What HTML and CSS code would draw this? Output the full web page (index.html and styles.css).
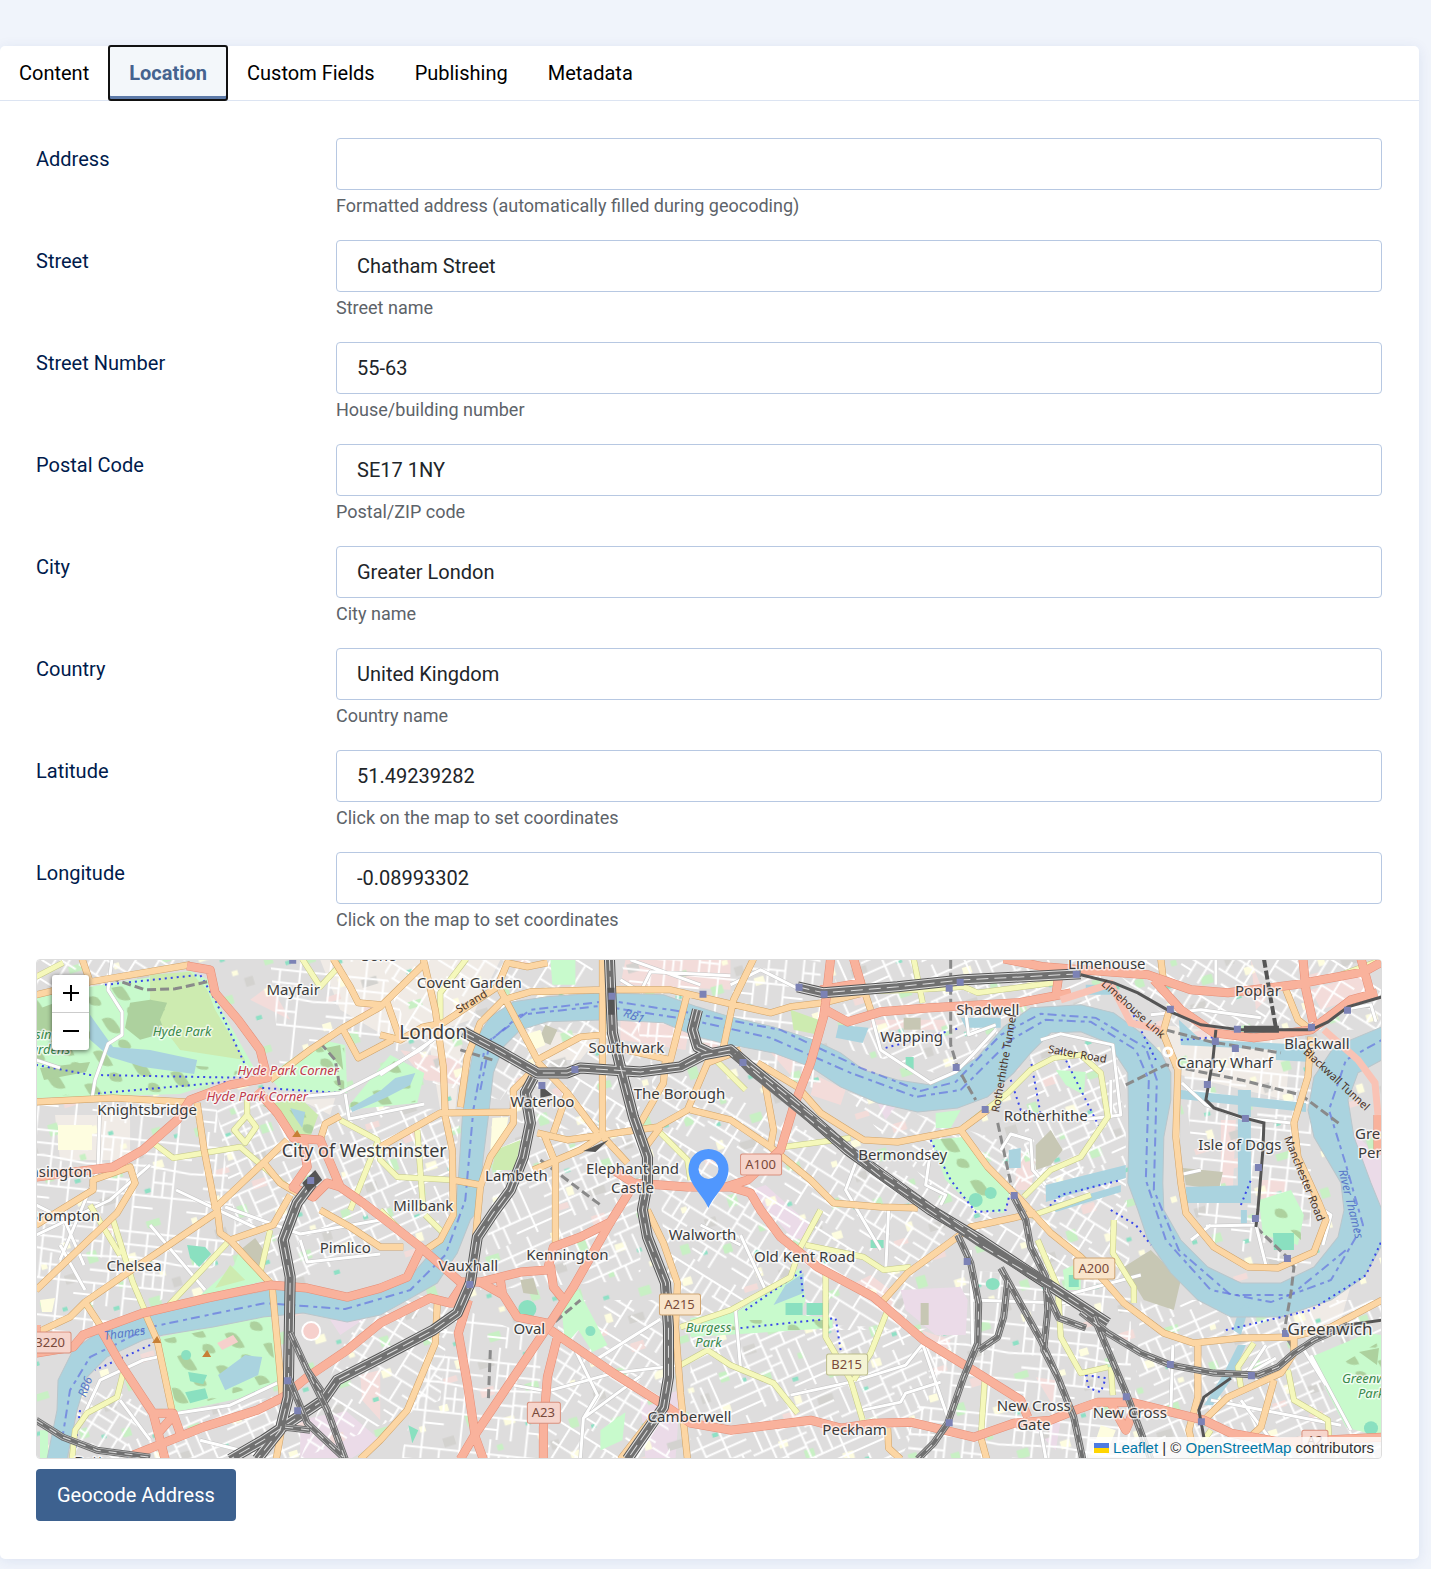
FILE: index.html
```html
<!DOCTYPE html>
<html lang="en">
<head>
<meta charset="utf-8">
<meta name="viewport" content="width=device-width, initial-scale=1">
<title>Location</title>
<link rel="stylesheet" href="styles.css">
</head>
<body>
<main class="card">
  <div class="tabs" role="tablist">
    <button class="tab" type="button" role="tab">Content</button>
    <button class="tab tab-active" type="button" role="tab" aria-selected="true">Location</button>
    <button class="tab" type="button" role="tab">Custom Fields</button>
    <button class="tab" type="button" role="tab">Publishing</button>
    <button class="tab" type="button" role="tab">Metadata</button>
  </div>
  <form class="panel">
    <div class="fields">
      <div class="field"><label for="address">Address</label><div><input id="address" type="text"><p class="help">Formatted address (automatically filled during geocoding)</p></div></div>
      <div class="field"><label for="street">Street</label><div><input id="street" type="text" value="Chatham Street"><p class="help">Street name</p></div></div>
      <div class="field"><label for="number">Street Number</label><div><input id="number" type="text" value="55-63"><p class="help">House/building number</p></div></div>
      <div class="field"><label for="postal">Postal Code</label><div><input id="postal" type="text" value="SE17 1NY"><p class="help">Postal/ZIP code</p></div></div>
      <div class="field"><label for="city">City</label><div><input id="city" type="text" value="Greater London"><p class="help">City name</p></div></div>
      <div class="field"><label for="country">Country</label><div><input id="country" type="text" value="United Kingdom"><p class="help">Country name</p></div></div>
      <div class="field"><label for="lat">Latitude</label><div><input id="lat" type="text" value="51.49239282"><p class="help">Click on the map to set coordinates</p></div></div>
      <div class="field"><label for="lng">Longitude</label><div><input id="lng" type="text" value="-0.08993302"><p class="help">Click on the map to set coordinates</p></div></div>
    </div>

    <div class="map">
      <svg class="map-canvas" viewBox="37 960 1343 498" preserveAspectRatio="xMidYMid slice" role="img" aria-label="Map of London">
        <defs>
          <pattern id="st-a" width="96" height="84" patternUnits="userSpaceOnUse" patternTransform="rotate(-24)">
            <path class="st" d="M0 12H96M0 40H58M58 34H96M0 66H96M10 0V40M31 12V84M52 0V66M74 0V34M86 34V84M10 54H31M31 27H52M64 34V66M44 66V84M0 77H31M52 50H64M66 77H96M20 12V40M52 22H74M74 22H96M75 40V66M31 53H52M20 40V54M56 66V84"/>
          </pattern>
          <pattern id="st-b" width="88" height="100" patternUnits="userSpaceOnUse" patternTransform="rotate(32)">
            <path class="st" d="M0 9H88M0 30H40M40 36H88M0 58H88M0 82H50M50 76H88M8 9V58M24 0V30M40 9V100M58 36V76M72 0V58M80 58V100M16 58V82M40 47H58M24 70H40M50 9V36M60 88H80M28 82V100M8 44H40M28 30V44M58 22H88M70 58V76M16 92H28M60 9V22"/>
          </pattern>
          <pattern id="st-c" width="104" height="92" patternUnits="userSpaceOnUse" patternTransform="rotate(6)">
            <path class="st" d="M0 15H104M0 44L60 40L104 44M0 70H104M14 0V44M33 15V70M50 0V92M68 15V70M88 0V92M14 57H33M50 28H68M68 56H88M20 70V92M0 82H20M50 82H70M34 28H50M88 30H104M24 15V44M68 28H88M78 44V70M33 56H50M42 56V70M34 70V92M14 28H24"/>
          </pattern>
          <pattern id="spots" width="157" height="133" patternUnits="userSpaceOnUse" patternTransform="rotate(-17)">
            <path fill="#fefde0" d="M8 10h9v7h-9zM66 40h11v8h-11zM120 92h10v8h-10zM36 104h7v9h-7zM140 24h6v6h-6zM94 66h6v5h-6z"/>
            <path fill="#c8f0c4" d="M30 26h10v12h-10zM96 14h14v7h-14zM76 88h12v9h-12zM12 72h9v9h-9zM128 60h9v10h-9zM52 64h6v6h-6z"/>
            <path fill="#f3dcd9" d="M52 6h14v9h-14zM20 118h14v6h-14z"/>
            <path fill="#8fe0c5" d="M86 50h5v4h-5zM40 86h6v4h-6zM148 72h5v4h-5zM104 116h6v4h-6z"/>
            <path fill="#d3d2cf" d="M58 112h16v8h-16zM2 42h12v9h-12zM104 76h9v9h-9z"/>
          </pattern>
          <pattern id="trees" width="40" height="34" patternUnits="userSpaceOnUse" patternTransform="rotate(15)">
            <path fill="#add19e" d="M2 6q8-6 15 0t8 8q-9 5-15 0t-8-8zM24 22q7-4 12 1t-4 6-8-7z"/>
          </pattern>

          <path id="thames" d="M47 1459L57 1410L58 1380L73 1350L97 1333L143 1317L207 1302L270 1290L297 1290L347 1298L380 1293L407 1280L433 1250L447 1227L455 1210L458 1180L462 1117L467 1083L475 1040L490 1017L513 1002L547 997L600 993L663 995L697 1007L730 1017L773 1027L813 1040L840 1053L863 1070L897 1080L930 1085L953 1073L977 1057L1003 1027L1030 1008L1080 1005L1113 1013L1140 1033L1160 1053L1170 1073L1170 1100L1163 1137L1162 1183L1163 1210L1180 1240L1207 1267L1240 1283L1280 1283L1313 1267L1337 1237L1343 1210L1340 1183L1313 1137L1307 1110L1313 1077L1333 1047L1381 1027V1060L1357 1073L1347 1100L1353 1137L1370 1183L1381 1210V1245L1363 1277L1330 1300L1280 1317L1230 1317L1197 1300L1170 1273L1147 1240L1137 1210L1127 1183L1128 1137L1127 1073L1107 1043L1080 1032L1050 1033L1030 1053L1013 1073L987 1097L957 1108L917 1112L877 1103L840 1087L810 1067L773 1053L730 1045L697 1037L663 1023L607 1020L547 1022L520 1030L503 1047L493 1073L488 1117L483 1157L478 1210L470 1220L457 1253L437 1283L407 1300L380 1315L347 1322L303 1313L263 1317L213 1327L163 1335L143 1340L107 1357L87 1377L77 1410L67 1459Z"/>

          <g id="minor">
            <path d="M112 959L108 990L122 1012V1035L108 1044L95 1080L92 1098M262 1100L340 1093L381 1072M345 1094L349 1119L424 1104M381 1072L420 1050L444 1030M36 1235L110 1200L150 1165M36 1205L64 1219L84 1265M100 1100L98 1170L60 1260M225 1207L300 1234L380 1220M300 1240L307 1262L380 1254M60 1245L85 1290M150 1225L205 1290M176 1190L260 1230"/>
            <path d="M177 1413L230 1405L277 1383M77 1430L100 1380L143 1360L157 1357M120 1400L150 1440M200 1440L260 1455M590 1363L660 1319M513 1385L547 1391L613 1373L680 1365M575 1350L597 1395L583 1418L580 1458M583 1418L640 1376M740 1235L765 1290L735 1310L740 1368M790 1395L850 1382L905 1365L922 1344L948 1420M862 1410L900 1402L905 1393L940 1382M888 1210L885 1272M970 1250L972 1345M970 1300L1065 1303M1065 1295L1140 1275"/>
            <path d="M620 980L640 992L650 972L730 976M630 960L700 985M870 1012L880 1050L930 1083L955 1072L972 1055L995 1030M965 1013L968 1035L995 1025M730 985L760 970L800 990M1000 1150L1010 1134L1030 1140L1032 1170L1045 1185M1040 1040L1060 1034L1112 1045L1120 1115L1080 1120M1110 1080V1118M1181 1083L1205 1105L1240 1118L1290 1123M1178 1100V1175L1200 1170M1205 1226L1255 1225L1265 1265M1210 1225L1190 1240M1315 1205L1330 1215L1322 1245M1172 1345L1170 1410M1310 1355L1350 1430M1300 1345L1325 1385M1240 1400L1270 1440M1210 1400L1340 1425M1265 1345L1245 1375L1275 1358M1040 1430L1045 1458M380 1075L440 1035M860 1150L845 1190L880 1250M930 1150L925 1185L945 1195L940 1205M1150 1015L1200 1010L1260 1018M1215 960V985M1330 1012L1370 1005L1375 1022M36 1060L60 1068M700 1225L740 1245"/>
          </g>
          <g id="yellow">
            <path d="M36 977L63 963M302 959L320 987L340 965M153 1143L173 1158L240 1147L287 1187M234 1130L245 1143L256 1127L247 1115ZM247 1115V1100M340 1120L377 1140L380 1160L397 1177L453 1180M417 1130L423 1210M440 1020V993L466 959M113 1220L133 1283L145 1311M167 1307L227 1243M270 1230L260 1273M123 1373L117 1397L87 1413L75 1430L72 1459M350 1210L378 1140M90 1205L120 1255"/>
            <path d="M657 1130L687 1160L690 1180M845 992L917 990L963 987L977 993L1053 983M913 959L922 1003M783 1147L850 1138M960 1130L1007 1093L1030 1070L1053 1058L1080 1055L1100 1073L1107 1117L1080 1157L1050 1170L1023 1197M680 1327L730 1310L790 1277L800 1247L820 1210M805 1245L863 1257L883 1270L910 1267M825 1273V1337L850 1380L862 1420M680 1365L707 1350L730 1365L773 1383L797 1413M887 1310L870 1353L853 1380M1037 1240L1057 1287L1060 1337L1080 1373L1107 1367M1113 1220L1112 1253L1133 1287V1303M1253 1343L1237 1367L1240 1387M1287 1370L1293 1400L1327 1420L1328 1437M1210 1430L1190 1459M1381 960L1340 975M1110 1367L1112 1395"/>
            <path d="M380 1210L410 1240M425 1215L445 1235M1030 1216L1090 1195M745 1090L700 1045M980 1440L984 1380"/>
          </g>
          <g id="orange">
            <path d="M36 995L90 982L190 965M82 959L90 982M36 1102L113 1098L187 1102M197 1103L204 1150L215 1207M270 1080L310 1050L343 1028L380 1007L423 965M333 959L350 987L358 1003L380 1005M343 1030L358 1058L392 1040M320 1140L325 1124L340 1116M213 1210L263 1163L287 1140M263 1162L280 1183L297 1193M36 1225L93 1190V1180L130 1167L135 1183L117 1213L36 1290M36 1333L70 1317L85 1302L127 1273L157 1253L217 1212M85 1302L102 1328M145 1313L157 1340L172 1411M272 1287L282 1395M217 1208L220 1233L230 1240L270 1283M230 1240L273 1225L290 1195M320 1210L350 1227L380 1247L403 1247"/>
            <path d="M423 959L435 1010L443 1067L445 1117L452 1150L453 1215L440 1240L425 1250M387 1003L400 1040L423 1027L443 1023L497 987L507 963L527 967L547 963M460 1107L467 1057L480 1023L503 1000L530 992L603 990L670 990L730 1004L770 1013L790 1007L823 1003L863 993M500 990L537 1060L580 1037L602 1035M602 959V1133M537 1062L567 1093L597 1133M537 1133L567 1140L657 1127L687 1110L707 1063L740 1050M530 1073L513 1090V1123L490 1157L480 1187L475 1240L471 1275M380 1147L440 1113L513 1112M453 1180L480 1185M533 1170L580 1150L600 1137M543 1133L555 1163V1247M567 1093L553 1133M603 1137L627 1163M640 1123L663 1083L665 1060M687 993L670 1060L625 1050M723 1047L733 1000L753 959M690 1110L730 1120L770 1147L810 1180L833 1203L880 1207L917 1208M643 1150L660 1127M860 980L870 1010M380 1035L400 1040"/>
            <path d="M647 1210L663 1243L677 1283L675 1327L680 1393L687 1459M437 1303L435 1343L407 1410L380 1440L360 1459M757 1063L797 1087L820 1113L863 1140L897 1142L960 1130L987 1110M960 1130L987 1167L1020 1200L1050 1233L1080 1257L1103 1280L1123 1303L1163 1333L1193 1343L1240 1338L1290 1337L1330 1327L1381 1300M763 1075L773 1130L770 1147M1035 1213L970 1227L943 1247L907 1273L883 1300M1160 959L1163 985M1168 1012L1162 1033L1177 1070L1175 1137L1180 1183L1185 1213L1213 1247L1247 1267L1277 1268L1313 1252L1325 1220L1318 1203L1297 1157L1293 1123L1307 1077L1310 1037M1285 990L1297 1020L1310 1030M1293 1337V1353L1280 1373L1227 1397L1203 1420M1197 1343V1397L1188 1430L1195 1459M1273 1380L1260 1427L1248 1438M980 1437L986 1459M887 1428L888 1448L900 1459M285 1410L276 1459M620 1459L650 1420"/>
          </g>
          <g id="red">
            <path d="M187 966L210 970L215 993L238 1020L260 1050L267 1078L230 1085L190 1100L177 1120L143 1150L113 1167L36 1177M257 1090L277 1113L293 1138L320 1140L330 1163L340 1187L363 1203L420 1247L460 1282L480 1282L520 1272L547 1270L553 1247L580 1237L610 1222L630 1190M303 1140L307 1167L293 1187L313 1197L327 1183L340 1187M36 1353L73 1347L83 1335L143 1313L207 1298L270 1285L307 1288L347 1297L380 1288L407 1277L420 1250M100 1328L120 1363L153 1413L160 1440L165 1459M133 1455L203 1427L257 1410L283 1397L307 1377L347 1350L380 1323L430 1298L450 1303L468 1303M153 1413H173L180 1433M173 1416L157 1434M36 1345V1325"/>
            <path d="M450 1303L462 1285M610 1222L573 1287L547 1327L473 1437L460 1459M550 1265L553 1287L562 1298M480 1282L503 1295L517 1317L547 1323M500 1280L502 1293M468 1300L458 1333L467 1383L475 1437L483 1459M557 1337L547 1377L543 1427V1459M550 1330L613 1373L667 1407L690 1423L730 1430L810 1420L840 1428L873 1423L910 1422L973 1437L1013 1423L1050 1420L1080 1408L1097 1402H1130L1203 1420L1230 1433L1280 1442L1381 1437M613 1170L633 1183L687 1187L730 1187L750 1193L760 1210L780 1237L817 1267L873 1297L923 1340L977 1373L1020 1400L1027 1417M625 1195L635 1182M725 1187L747 1180L780 1150L793 1107L810 1063L823 1017L825 1003L830 959M825 1010L847 1022L880 1012L930 1008L1017 1003L1070 993M853 959L860 983L820 990M1003 959L1043 967L1080 970L1147 975L1190 990L1227 993L1293 985L1363 972L1381 962M1153 980L1180 1010L1213 1033L1253 1038L1310 1030L1333 1013L1350 1000L1376 993M1302 959L1305 990L1312 1022M1360 959L1370 995M1058 975L1055 997M1377 1115V1155M1110 1403L1125 1430L1135 1405"/>
          </g>
          <g id="rail-wide">
            <path d="M463 1032L497 1050L537 1073H567L580 1068L640 1072L680 1067L703 1055L730 1050L750 1067L787 1097L847 1150L930 1210L980 1240L1030 1273L1107 1323M609 959L612 1033L620 1067L633 1117L647 1157V1183L642 1210L647 1237L665 1283L668 1327V1377L663 1407L627 1459M697 1010L692 1030L697 1047L710 1053M533 1078L525 1093L530 1123L523 1157L510 1190L493 1213L477 1237L470 1283L457 1313L433 1330L380 1358L337 1380L323 1400L263 1440L230 1459M312 1183L297 1203L283 1240L290 1277L288 1397L280 1430L257 1459M797 987L823 993L897 987L963 980L1080 974"/>
          </g>
          <g id="rail-mid">
            <path d="M290 1333L307 1370L327 1410L345 1459M288 1377L307 1423L343 1457M36 1420L63 1437L97 1450L150 1457M957 1235L970 1263L978 1303L977 1343L963 1377L947 1423L933 1443L917 1459M1007 1280L1003 1317L997 1337L978 1350M1000 1268L1040 1340L1057 1377L1073 1417L1082 1459M1013 1197L1025 1220L1030 1247L1045 1277L1047 1310L1043 1350L1057 1377M1093 1317L1107 1350L1127 1397L1150 1459M1080 1312L1107 1333L1140 1353L1170 1365L1213 1373L1257 1375L1277 1367L1293 1353L1313 1340L1347 1325M1045 1290L1058 1318L1085 1328M307 1370L322 1392M285 1427L310 1430"/>
          </g>
        </defs>

        <rect x="36" y="959" width="1345" height="500" fill="#dedddd"/>
        <g fill="#f0ebe6">
          <path d="M55 1115H130V1160H60ZM320 960H500L470 1020L400 1045L340 1010ZM425 1020L462 1040L455 1110H440ZM300 1100L335 1098L330 1115ZM1160 1025L1290 1040L1285 1100L1180 1075ZM1300 1310L1350 1285L1340 1320L1305 1340ZM520 1030L600 1035L580 1060L540 1060Z"/>
        </g>
        <g fill="#f3dcda">
          <path d="M625 960H730V990L620 985ZM620 1000L690 1020L685 1050L620 1040ZM250 1000L270 985L290 1020ZM750 1030L800 1050L790 1075ZM815 1075L845 1090L840 1105L810 1095ZM870 1020H945V1030H870ZM1250 960L1265 1000L1255 1010ZM1310 990L1360 975L1365 995L1320 1010ZM1220 1120L1235 1120L1232 1190H1220ZM1260 1180H1285V1200H1260ZM1015 1150L1035 1160L1030 1190H1015ZM920 1330L950 1340L945 1352ZM1035 1377L1055 1380L1052 1405ZM360 1375L380 1370V1420L362 1400ZM870 1275L890 1290L895 1320L850 1285ZM400 1050L460 1060V1085L425 1080Z"/>
        </g>
        <g fill="#ebdbe8">
          <path d="M750 1190L765 1185L810 1225L798 1245ZM300 1420L345 1410L380 1440L350 1459H300ZM640 1400L680 1390L675 1459H645ZM330 1320L370 1315L340 1335ZM1340 1120L1381 1160V1215L1365 1180ZM877 1103L895 1107L885 1120ZM1030 1425L1060 1420L1055 1450Z"/>
        </g>
        <rect x="36" y="959" width="1345" height="500" fill="url(#spots)"/>
        <g>
          <path fill="url(#st-c)" d="M36 1100H215L240 1250L145 1310L36 1350ZM270 960H380L420 1060L340 1030L280 1070ZM620 959H820V1090L640 1040ZM1180 1040H1310V1270L1200 1240ZM960 1270L1130 1280V1459H900ZM440 1300L540 1340V1459H400Z"/>
          <path fill="url(#st-a)" d="M215 1100L460 1110L450 1220L270 1290L240 1250ZM830 959H1100V1000L960 1080L850 1050ZM500 1140L640 1120V1280L480 1290ZM170 1420L300 1390V1459H100ZM690 1320L960 1330L900 1459H690ZM1140 1300L1381 1300V1459H1130ZM1030 1050L1125 1040V1180L1020 1190Z"/>
          <path fill="url(#st-b)" d="M380 959H600L500 1100L420 1080ZM650 1060L960 1200L900 1330L670 1330ZM840 1090L1125 1180L1130 1290L1000 1260ZM560 1300H660L670 1459H545ZM80 1370L150 1410L120 1459H72ZM1100 959H1381V1030H1180ZM380 1290L450 1300L440 1400L300 1459L340 1350ZM520 1040L640 1000V1140L500 1120ZM36 959H190L90 990L36 990Z"/>
        </g>
        <path fill="#ebdbe8" d="M900 1290L960 1287L967 1300L965 1335L935 1335L905 1310Z"/>
        <path fill="#c7c7b4" d="M1123 1267L1150 1250L1180 1280L1173 1310L1143 1300ZM1182 1168L1222 1172L1218 1190L1185 1185ZM1035 1145L1050 1130L1062 1150L1050 1165L1035 1170ZM240 1250L255 1238L267 1255L258 1270ZM520 1280L533 1278L538 1295L523 1293ZM545 1025L557 1030L550 1045L538 1040ZM903 1018H920V1030H903ZM920 1303H928V1325H920Z"/>

        <g fill="#c8facc">
          <path d="M36 998L90 987L190 971L208 980L217 1002L255 1070L180 1094L36 1098Z"/>
          <path d="M268 1075L320 1040L345 1045L347 1093L280 1090ZM345 1110L390 1055L424 1073L417 1103ZM160 1337L270 1313L279 1380L240 1398L175 1412ZM234 1265L240 1250L268 1280L225 1290L195 1300ZM690 1318L730 1313L800 1268L805 1300L800 1315L832 1318V1328L690 1337ZM1310 1357L1367 1333L1381 1335V1437L1345 1427L1327 1393ZM930 1140L962 1137L1010 1190L1003 1213L975 1210L945 1180ZM1258 1200L1290 1190L1303 1215L1297 1245L1262 1235ZM560 1300L578 1290L607 1345L592 1352L578 1330L565 1345ZM600 1430L625 1412L622 1440L600 1450ZM1055 1070L1085 1072L1083 1095L1065 1085ZM935 1113L960 1110L950 1128H935ZM40 1430H48V1459H40ZM1062 1270L1080 1262V1290L1065 1290ZM550 960H575V985H552Z"/>
        </g>
        <g fill="#cdebb0">
          <path d="M150 975L190 972L207 990L215 1010L245 1060L180 1050L150 1010ZM265 1105L300 1098L318 1115L310 1137L290 1135ZM495 1150L520 1140L515 1170L492 1170ZM790 1010L818 1020V1035L793 1030ZM230 1265L245 1280L215 1288Z"/>
        </g>
        <path fill="url(#trees)" d="M36 1000L130 985L165 1010L120 1060L250 1070L180 1092L36 1096ZM315 1045L344 1045V1090L320 1075ZM345 1108L395 1060L420 1075L415 1102ZM160 1340L268 1317L277 1380L177 1410ZM930 1140L962 1137L1010 1190L975 1205ZM262 1105L318 1115L310 1137ZM1330 1370L1381 1340V1400ZM1262 1205L1300 1210V1240ZM700 1320L830 1320V1330H700Z"/>
        <path fill="#add19e" d="M130 1003L150 1000L167 1003L160 1020L165 1033L140 1040L125 1028ZM36 1010L55 1003L75 1012L70 1035L36 1040ZM40 1068L90 1062L86 1072L44 1080ZM325 1048L340 1045L343 1070ZM1358 1352L1378 1348L1376 1365Z"/>
        <g fill="#8ae0c0">
          <path d="M187 1245L205 1247L211 1254L199 1267L190 1258ZM188 1372L207 1375L203 1384L190 1381ZM185 1392L205 1388L208 1398L190 1403ZM785 1303H802V1315H785ZM806 1303H828V1315H806ZM1272 1233H1293V1250H1273ZM870 1240H883V1248H870ZM1068 1275H1078V1287H1068ZM905 1057H913V1070H905ZM408 1425L418 1430L412 1443Z"/>
          <circle cx="527" cy="1309" r="9"/><circle cx="590" cy="1331" r="5"/><circle cx="186" cy="1355" r="5"/><circle cx="975" cy="1200" r="7"/><circle cx="990" cy="1193" r="6"/><circle cx="1370" cy="1428" r="7"/>
          <ellipse cx="992" cy="1284" rx="7" ry="6"/>
        </g>
        <path fill="#fefde0" d="M58 1125H92V1150H58ZM492 1118L508 1117L505 1137L490 1150ZM525 1035L540 1030L545 1045L528 1052ZM1100 1425L1115 1430L1105 1455H1090ZM40 1300L55 1298L52 1312H42Z"/>
        <g fill="#f6d0cc">
          <path d="M217 1343L233 1335L238 1342L222 1350Z"/><circle cx="311" cy="1331" r="9" stroke="#fff" stroke-width="2"/>
        </g>

        <g fill="#aad3df">
          <use href="#thames"/>
          <path d="M90 1015L113 1047L150 1050L197 1060L194 1074L143 1067L110 1057L90 1040ZM350 1108L381 1090L395 1078L415 1073L410 1085L385 1098L352 1112ZM290 1108L305 1112L302 1128L295 1118ZM218 1375L245 1355L262 1357L258 1375L225 1390ZM773 1305L785 1285L803 1273V1293L778 1303ZM838 1025L868 1028L862 1043L835 1038ZM1178 1020L1200 1040L1310 1045V1062L1275 1060V1050L1180 1045ZM1180 1090L1305 1103V1112L1180 1099ZM1237 1090H1250V1200H1237ZM1185 1187L1250 1185V1203H1186ZM1045 1185L1125 1165V1178L1045 1202ZM1008 1150L1020 1148V1168H1008ZM1050 1205L1120 1185V1192L1055 1212ZM1237 1345L1245 1345L1230 1380L1212 1405L1203 1405L1222 1375ZM1250 1300L1240 1335L1232 1330L1238 1310ZM960 1018H1000V1028H965ZM1085 985H1110V995H1085ZM1240 1210H1246V1225H1240Z"/>
        </g>
        <g class="bank"><use href="#thames"/></g>
        <g class="ferry">
          <path d="M62 1440L70 1390L90 1357L150 1327L265 1303L345 1309L410 1290L445 1255L465 1200L473 1110L485 1045L520 1015L600 1006L690 1020L770 1038L850 1073L915 1097L960 1090L1010 1040L1045 1020L1090 1022L1135 1050L1148 1080L1145 1180L1165 1240L1210 1290L1270 1302L1330 1280L1362 1225L1345 1165L1328 1110L1345 1060L1381 1040"/>
          <path d="M480 1090L490 1040L530 1010L610 1001L690 1013L780 1030L860 1068L920 1091L955 1082L1000 1035L1040 1014L1095 1018L1145 1048L1156 1080L1153 1190L1178 1250L1230 1295L1290 1295L1345 1250"/>
        </g>
        <g class="path-blue">
          <path d="M105 985L200 975L215 1000L245 1065M36 1065L90 1075L250 1078M92 1094L250 1080M262 1088L340 1093M930 1140L950 1180L975 1212L1005 1210L1010 1190L965 1140M740 1328L835 1318L840 1350M745 1310L800 1272L803 1300M1010 1080L1020 1110L1040 1115L1030 1060M1130 1010L1155 1060M1240 1205L1250 1180M1225 1330L1310 1310L1365 1275L1381 1240M1060 1050L1100 1130M1045 1210L1060 1195L1120 1180M1085 1375L1105 1378L1100 1392L1088 1388ZM150 1345L95 1370M80 1410L75 1450M1180 1040L1240 1035M885 1048L960 1028M1110 1210L1135 1225L1150 1245"/>
        </g>

        <g class="dash-dark"><path d="M110 978L145 990L175 989L207 982M950 960V1045L957 1068L975 1100M997 1123L1005 1160L1013 1197M1165 1030L1210 1042L1280 1053M1125 1085L1165 1065L1240 1080L1300 1095L1340 1125M1255 1227L1287 1258L1293 1267L1290 1293L1283 1333L1295 1353M492 1060L460 1050M540 1160L600 1205M545 1330L580 1300M320 1043L335 1060L340 1090M490 1350L488 1400"/></g>

        <use href="#minor" class="minor-case"/><use href="#minor" class="minor"/>
        <use href="#yellow" class="yellow-case"/><use href="#yellow" class="yellow"/>
        <use href="#orange" class="orange-case"/><use href="#orange" class="orange"/>
        <use href="#red" class="red-case"/><use href="#red" class="red"/>
        <path class="tunnel" d="M1060 1000L1110 984L1130 1023L1160 1030M1323 1030L1357 1060L1374 1083L1377 1115"/>
        <circle cx="1167" cy="1052" r="4" fill="none" stroke="#fff" stroke-width="3"/>

        <use href="#rail-wide" class="rail-case"/><use href="#rail-wide" class="rail-gap"/><use href="#rail-wide" class="rail"/><use href="#rail-wide" class="rail-dash"/>
        <use href="#rail-mid" class="railm-case"/><use href="#rail-mid" class="railm-gap"/><use href="#rail-mid" class="railm"/><use href="#rail-mid" class="railm-dash"/>
        <path fill="none" stroke="#707070" stroke-width="9" d="M735 1054L750 1070L787 1100L880 1175L980 1243L1050 1285"/>
        <path fill="none" stroke="#ddd" stroke-width="1" stroke-dasharray="12 5" d="M740 1060L787 1102L880 1177L980 1245L1050 1287M750 1066L880 1171L980 1239"/>
        <path class="dlr" d="M1080 975L1113 983L1137 993L1170 1012L1200 1025L1240 1030H1310L1327 1022L1347 1007L1381 997M1215 1030L1212 1060L1205 1100L1213 1108L1243 1118L1263 1123L1262 1150L1257 1210L1255 1227M1230 1378L1203 1397L1198 1410L1203 1437M1347 1325L1381 1320"/>
        <path fill="none" stroke="#555" stroke-width="4" stroke-dasharray="9 3" d="M1263 959L1270 1000L1275 1028"/>
        <path fill="#555" d="M1243 1026H1278V1033H1243ZM315 1170L322 1180L308 1192L302 1183ZM540 1085L552 1095L540 1098ZM583 1151L608 1140L595 1152ZM607 988H614V1015H608Z"/>

        <g fill="#7c82b5">
          <path d="M289 959h7v5h-7zM307 1177h7v7h-7zM538 1082h7v7h-7zM571 1066h7v7h-7zM608 993h7v7h-7zM699 991h7v7h-7zM739 1059h7v7h-7zM795 984h7v7h-7zM820 991h7v7h-7zM945 985h7v7h-7zM956 979h7v7h-7zM952 1064h7v7h-7zM981 1106h7v7h-7zM1010 1192h7v7h-7zM1072 971h7v7h-7zM1166 1006h7v7h-7zM1233 1026h7v7h-7zM1211 1038h7v7h-7zM1231 1045h7v7h-7zM1307 1024h7v7h-7zM1343 1007h7v7h-7zM1203 1081h7v7h-7zM1241 1115h7v7h-7zM1254 1164h7v7h-7zM1251 1215h7v7h-7zM1283 1255h7v7h-7zM1281 1330h7v7h-7zM1166 1361h7v7h-7zM1247 1372h7v7h-7zM1122 1393h7v7h-7zM1197 1418h7v7h-7zM963 1258h7v7h-7zM945 1419h7v7h-7zM284 1377h7v7h-7zM294 1407h7v7h-7zM466 1281h7v7h-7z"/>
        </g>
        <path fill="#c77f35" d="M157 1336l4 7h-9zM207 1350l4 7h-9zM297 1130l4 7h-9z"/>

        <g class="place">
          <text x="293" y="995">Mayfair</text><text x="379" y="961">Soho</text><text x="469" y="988">Covent Garden</text>
          <text x="626" y="1053">Southwark</text><text x="679" y="1099">The Borough</text><text x="542" y="1107">Waterloo</text>
          <text x="147" y="1115">Knightsbridge</text><text x="92" y="1177" class="end">Kensington</text><text x="100" y="1221" class="end">Brompton</text>
          <text x="134" y="1271">Chelsea</text><text x="345" y="1253">Pimlico</text><text x="423" y="1211">Millbank</text><text x="516" y="1181">Lambeth</text>
          <text x="468" y="1271">Vauxhall</text><text x="567" y="1260">Kennington</text><text x="529" y="1334">Oval</text>
          <text x="632" y="1174">Elephant and</text><text x="632" y="1193">Castle</text><text x="702" y="1240">Walworth</text><text x="804" y="1262">Old Kent Road</text>
          <text x="902" y="1160">Bermondsey</text><text x="911" y="1042">Wapping</text><text x="987" y="1015">Shadwell</text><text x="1106" y="969">Limehouse</text>
          <text x="1257" y="996">Poplar</text><text x="1316" y="1049">Blackwall</text><text x="1224" y="1068">Canary Wharf</text><text x="1045" y="1121">Rotherhithe</text>
          <text x="1239" y="1150">Isle of Dogs</text><text x="1354" y="1139" class="start">Greenwich</text><text x="1357" y="1158" class="start">Peninsula</text>
          <text x="689" y="1422">Camberwell</text><text x="854" y="1435">Peckham</text><text x="1033" y="1411">New Cross</text><text x="1033" y="1430">Gate</text><text x="1129" y="1418">New Cross</text>
          <text x="108" y="1467">Battersea</text>
          <text x="364" y="1157" class="big">City of Westminster</text><text x="433" y="1039" class="capital">London</text><text x="1329" y="1335" class="town">Greenwich</text>
        </g>
        <g class="park">
          <text x="182" y="1036">Hyde Park</text><text x="46" y="1039">Kensington</text><text x="46" y="1054">Gardens</text>
          <text x="708" y="1332">Burgess</text><text x="708" y="1347">Park</text><text x="1341" y="1383" class="start">Greenwich</text><text x="1357" y="1398" class="start">Park</text>
        </g>
        <g class="junction"><text x="288" y="1075">Hyde Park Corner</text><text x="257" y="1101">Hyde Park Corner</text></g>
        <g class="road">
          <text transform="translate(473 1005) rotate(-31)">Strand</text>
          <text transform="translate(1076 1058) rotate(10)">Salter Road</text>
          <text transform="translate(1007 1064) rotate(-80)">Rotherhithe Tunnel</text>
          <text transform="translate(1130 1012) rotate(42)">Limehouse Link</text>
          <text transform="translate(1333 1082) rotate(43)">Blackwall Tunnel</text>
          <text transform="translate(1300 1180) rotate(68)">Manchester Road</text>
        </g>
        <g class="river">
          <text transform="translate(1346 1205) rotate(76)">River Thames</text><text transform="translate(125 1337) rotate(-8)">Thames</text>
          <text transform="translate(632 1020) rotate(22)">RB1</text><text transform="translate(89 1388) rotate(-70)">RB6</text>
        </g>
        <g class="shields">
          <g fill="#f6d5cc" stroke="#d9907c"><rect x="740" y="1154" width="41" height="21" rx="2"/><rect x="527" y="1402" width="33" height="21" rx="2"/><rect x="30" y="1332" width="41" height="21" rx="2"/><rect x="1301" y="1430" width="26" height="21" rx="2"/></g>
          <g fill="#f9e5cb" stroke="#d0a572"><rect x="659" y="1294" width="41" height="21" rx="2"/><rect x="1073" y="1258" width="41" height="21" rx="2"/></g>
          <rect x="826" y="1354" width="41" height="21" rx="2" fill="#f4f4d4" stroke="#bcbc8c"/>
          <text x="760" y="1169">A100</text><text x="543" y="1417">A23</text><text x="46" y="1347">A3220</text><text x="1314" y="1445">A2</text><text x="679" y="1309">A215</text><text x="1093" y="1273">A200</text><text x="846" y="1369">B215</text>
        </g>
        <path fill="#5097fe" fill-rule="evenodd" d="M708 1208C702 1194 688 1185 688 1169A20 20 0 0 1 728 1169C728 1185 714 1194 708 1208ZM708 1159A10 10 0 1 0 708 1179A10 10 0 1 0 708 1159Z"/>
      </svg>
      <div class="zoom">
        <button type="button" aria-label="Zoom in"><svg viewBox="0 0 16 16" width="16" height="16"><path d="M0 8H16M8 0V16"/></svg></button>
        <button type="button" aria-label="Zoom out"><svg viewBox="0 0 16 16" width="16" height="16"><path d="M0 8H16"/></svg></button>
      </div>
      <div class="attribution">
        <a href="#leaflet"><svg width="15" height="10" viewBox="0 0 15 10"><path fill="#4c7be1" d="M0 0h15v5H0z"/><path fill="#ffd500" d="M0 5h15v5H0z"/></svg> Leaflet</a> | © <a href="#osm">OpenStreetMap</a> contributors
      </div>
    </div>
    <button class="primary" type="button">Geocode Address</button>
  </form>
</main>
</body>
</html>
```
FILE: styles.css
```css
* { box-sizing: border-box; }

body {
  margin: 0;
  padding: 46px 12px 10px 0;
  background: #f0f4fb;
  color: #212529;
  font: 20px/30px Roboto, sans-serif;
}

button, input { font: inherit; }

.card {
  background: #fff;
  border-radius: 5px;
  box-shadow: 0 2px 14px rgba(20, 50, 140, .09);
}

/* Tabs */
.tabs {
  display: flex;
  height: 55px;
  border-bottom: 1px solid #dce4f2;
}
.tab {
  padding: 0 20px;
  border: 0;
  background: none;
  color: #000;
}
.tab:first-child { padding-left: 19px; }
.tab-active {
  background: #f3f7fa;
  color: #45638f;
  font-weight: 700;
  border-radius: 2px;
  box-shadow: inset 0 -4px #5c7aa8;
  outline: 2px solid #111;
  outline-offset: -1px;
}

/* Form */
.panel { padding: 37px 37px 38px 36px; }
.fields { display: grid; gap: 22px; }
.field {
  display: grid;
  grid-template-columns: 300px 1fr;
}
.field label {
  padding-top: 6px;
  color: #001b4c;
}
.field input {
  display: block;
  width: 100%;
  height: 52px;
  padding: 0 20px;
  border: 1px solid #b7c8e2;
  border-radius: 4px;
  background: #fff;
  color: #212529;
}
.help {
  margin: 4px 0 0;
  color: #5d6369;
  font-size: 18px;
  line-height: 24px;
}
.primary {
  display: block;
  height: 52px;
  margin-top: 10px;
  padding: 0 21px;
  border: 0;
  border-radius: 4px;
  background: #3d618f;
  color: #fff;
}

/* Map */
.map {
  position: relative;
  height: 500px;
  margin-top: 27px;
  border: 1px solid #ddd;
  border-radius: 4px;
  overflow: hidden;
}
.map-canvas {
  display: block;
  width: 100%;
  height: 100%;
}
.zoom {
  position: absolute;
  top: 15px;
  left: 15px;
  width: 37px;
  border-radius: 3px;
  background: #fff;
  box-shadow: 0 1px 5px rgba(0, 0, 0, .6);
}
.zoom button {
  display: grid;
  place-items: center;
  width: 37px;
  height: 37px;
  padding: 0 0 1px 1px;
  border: 0;
  background: none;
}
.zoom button + button { height: 38px; border-top: 1px solid #ccc; }
.zoom path { stroke: #000; stroke-width: 2; fill: none; }
.attribution {
  position: absolute;
  right: 0;
  bottom: 0;
  padding: 0 7px 0 6px;
  background: rgba(255, 255, 255, .8);
  color: #333;
  font: 15px/21px "Liberation Sans", Arial, sans-serif;
}
.attribution a { color: #0078a8; text-decoration: none; }

/* Map drawing */
.st { fill: none; stroke: #fff; stroke-width: 2; }
.minor, .minor-case, .yellow, .yellow-case, .orange, .orange-case, .red, .red-case {
  fill: none;
  stroke-linejoin: round;
}
.minor-case { stroke: #c4c4c4; stroke-width: 4; }
.minor { stroke: #fff; stroke-width: 3; }
.yellow-case { stroke: #c3c786; stroke-width: 6; }
.yellow { stroke: #f5f8bb; stroke-width: 5; }
.orange-case { stroke: #cfa268; stroke-width: 7; }
.orange { stroke: #fcd6a4; stroke-width: 6; }
.red-case { stroke: #e58d76; stroke-width: 9; }
.red { stroke: #f9b29c; stroke-width: 8; }
.tunnel { fill: none; stroke: #f9c3b5; stroke-width: 7; }
.bank { fill: none; stroke: #b9c6cb; stroke-width: 1; }
.ferry { fill: none; stroke: #6474e0; stroke-width: 2; stroke-opacity: .7; stroke-dasharray: 9 5 4 4; }
.path-blue { fill: none; stroke: #3a48e8; stroke-width: 2; stroke-dasharray: 2 4; }
.dash-dark { fill: none; stroke: #8a8a8a; stroke-width: 3; stroke-dasharray: 9 4; }
.rail-case, .rail-gap, .rail, .rail-dash, .railm-case, .railm-gap, .railm, .railm-dash { fill: none; stroke-linejoin: round; }
.rail-case { stroke: #555; stroke-width: 11; }
.rail-gap { stroke: #ddd; stroke-width: 9; }
.rail { stroke: #707070; stroke-width: 7; }
.rail-dash { stroke: #ddd; stroke-width: 1; stroke-dasharray: 12 6; }
.railm-case { stroke: #707070; stroke-width: 7; }
.railm-gap { stroke: #ccc; stroke-width: 5; }
.railm { stroke: #707070; stroke-width: 4; }
.railm-dash { stroke: #ddd; stroke-width: 1; stroke-dasharray: 8 8; }
.dlr { fill: none; stroke: #555; stroke-width: 3; }

.place, .park, .junction, .road, .river, .shields text {
  font-family: "Noto Sans", sans-serif;
  text-anchor: middle;
}
.place, .park, .junction {
  stroke: rgba(255, 255, 255, .7);
  stroke-width: 3px;
  stroke-linejoin: round;
  paint-order: stroke;
}
.place { fill: #3c3c3c; font-size: 15px; }
.end { text-anchor: end; }
.start { text-anchor: start; }
.big { font-size: 18px; }
.town { font-size: 17px; }
.capital { font-size: 19px; }
.park { fill: #3a8a4c; font-size: 13px; font-style: italic; }
.junction { fill: #c0394a; font-size: 13px; font-style: italic; }
.road { fill: #4a3428; font-size: 11px; }
.river { fill: #5878c8; font-size: 12px; font-style: italic; }
.shields text { fill: #7a4a3a; font-size: 13px; }
```
